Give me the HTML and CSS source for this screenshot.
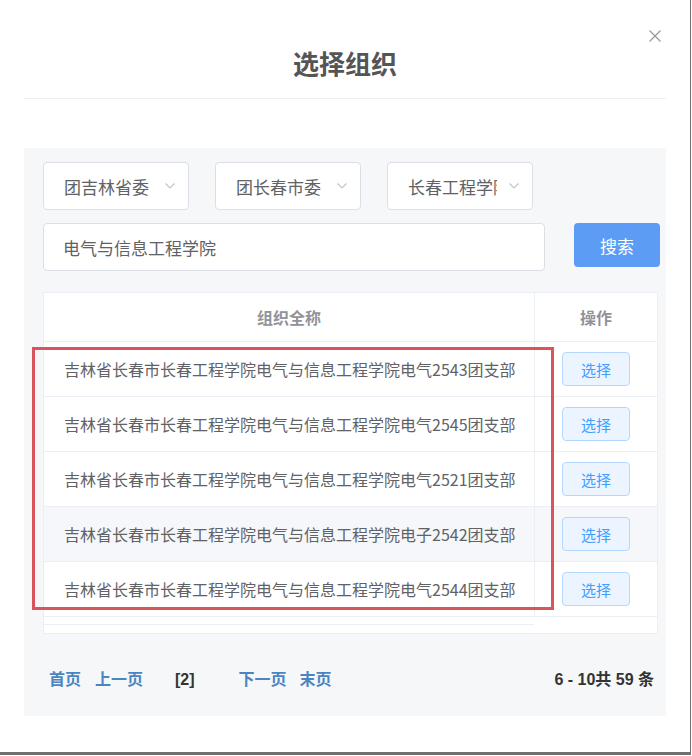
FILE: index.html
```html
<!DOCTYPE html>
<html lang="zh-CN">
<head>
    <meta charset="UTF-8">
    <meta name="viewport" content="width=device-width, initial-scale=1.0">
    <title>选择组织</title>
    <link rel="stylesheet" href="styles.css">
</head>
<body>

    <div class="dialog">
        <!-- Header -->
        <div class="dialog-header">
            <h2 class="dialog-title">选择组织</h2>
            <button class="close-btn" aria-label="关闭">
                <svg width="12" height="12" viewBox="0 0 12 12"><path d="M0.5 0.5L11.5 11.5M11.5 0.5L0.5 11.5" stroke="#9a9a9a" stroke-width="1.3" fill="none"/></svg>
            </button>
        </div>

        <!-- Search panel -->
        <div class="panel">
            <div class="filter-row">
                <div class="select">
                    <span class="select-text">团吉林省委</span>
                    <svg class="arrow" width="10" height="6" viewBox="0 0 10 6"><path d="M0.5 0.5L5 5L9.5 0.5" stroke="#c0c4cc" stroke-width="1.2" fill="none"/></svg>
                </div>
                <div class="select">
                    <span class="select-text">团长春市委</span>
                    <svg class="arrow" width="10" height="6" viewBox="0 0 10 6"><path d="M0.5 0.5L5 5L9.5 0.5" stroke="#c0c4cc" stroke-width="1.2" fill="none"/></svg>
                </div>
                <div class="select">
                    <span class="select-text">长春工程学院</span>
                    <svg class="arrow" width="10" height="6" viewBox="0 0 10 6"><path d="M0.5 0.5L5 5L9.5 0.5" stroke="#c0c4cc" stroke-width="1.2" fill="none"/></svg>
                </div>
            </div>

            <div class="search-row">
                <input class="search-input" type="text" value="电气与信息工程学院">
                <button class="search-btn">搜索</button>
            </div>

            <!-- Result table -->
            <div class="org-table">
                <div class="tr th">
                    <div class="td name">组织全称</div>
                    <div class="td op">操作</div>
                </div>
                <div class="tr">
                    <div class="td name">吉林省长春市长春工程学院电气与信息工程学院电气2543团支部</div>
                    <div class="td op"><button class="pick-btn">选择</button></div>
                </div>
                <div class="tr">
                    <div class="td name">吉林省长春市长春工程学院电气与信息工程学院电气2545团支部</div>
                    <div class="td op"><button class="pick-btn">选择</button></div>
                </div>
                <div class="tr">
                    <div class="td name">吉林省长春市长春工程学院电气与信息工程学院电气2521团支部</div>
                    <div class="td op"><button class="pick-btn">选择</button></div>
                </div>
                <div class="tr hover">
                    <div class="td name">吉林省长春市长春工程学院电气与信息工程学院电子2542团支部</div>
                    <div class="td op"><button class="pick-btn">选择</button></div>
                </div>
                <div class="tr">
                    <div class="td name">吉林省长春市长春工程学院电气与信息工程学院电气2544团支部</div>
                    <div class="td op"><button class="pick-btn">选择</button></div>
                </div>
                <div class="table-foot"><div class="foot-line"></div></div>
            </div>

            <!-- Annotation box -->
            <div class="red-mark"></div>

            <!-- Pagination -->
            <div class="pager">
                <div class="pager-links">
                    <a class="pg first">首页</a>
                    <a class="pg prev">上一页</a>
                    <span class="pg current">[2]</span>
                    <a class="pg next">下一页</a>
                    <a class="pg last">末页</a>
                </div>
                <div class="pager-total">6 - 10共 59 条</div>
            </div>
        </div>
    </div>

</body>
</html>
```

FILE: styles.css
```css
/* Page */
body {
    margin: 0;
    background: #fff;
    font-family: "Noto Sans CJK SC", "Noto Sans", sans-serif;
}

/* Dialog (with the screen edge on right/bottom) */
.dialog {
    width: 690px;
    height: 752px;
    border-right: 1px solid #6e6e6e;
    border-bottom: 3px solid #707070;
    background: #fff;
    position: relative;
}

/* Header */
.dialog-header {
    margin: 0 24px;
    padding: 45px 0 17px;
    border-bottom: 1px solid #eeeff2;
}

.dialog-title {
    margin: 0;
    height: 36px;
    line-height: 36px;
    text-align: center;
    font-size: 26px;
    font-weight: bold;
    color: #555;
}

.close-btn {
    position: absolute;
    top: 30px;
    right: 29px;
    width: 12px;
    height: 12px;
    padding: 0;
    border: none;
    background: none;
    display: flex;
}

/* Gray search panel */
.panel {
    position: relative;
    margin: 49px 24px 0;
    height: 568px;
    box-sizing: border-box;
    padding: 14px 6px 0 19px;
    background: #f6f7f9;
}

.filter-row {
    display: flex;
    gap: 26px;
}

.select {
    width: 146px;
    height: 48px;
    box-sizing: border-box;
    display: flex;
    align-items: center;
    padding: 0 13px 0 20px;
    background: #fff;
    border: 1px solid #dcdfe6;
    border-radius: 4px;
}

.select-text {
    width: 91px;
    margin-right: 12px;
    overflow: hidden;
    white-space: nowrap;
    font-size: 17px;
    color: #606266;
}

.arrow {
    flex: none;
}

.search-row {
    display: flex;
    align-items: flex-start;
    margin-top: 13px;
}

.search-input {
    width: 502px;
    height: 48px;
    box-sizing: border-box;
    padding: 0 19px;
    border: 1px solid #dcdfe6;
    border-radius: 4px;
    background: #fff;
    font-family: inherit;
    font-size: 17px;
    color: #606266;
    outline: none;
}

.search-btn {
    margin-left: 29px;
    width: 86px;
    height: 44px;
    border: none;
    border-radius: 4px;
    background: #5d9cf5;
    color: #fff;
    font-family: inherit;
    font-size: 17px;
}

/* Table */
.org-table {
    margin-top: 21px;
    width: 615px;
    box-sizing: border-box;
    border: 1px solid #ebeef5;
    background: #fff;
}

.tr {
    display: grid;
    grid-template-columns: 491px 1fr;
    height: 55px;
    box-sizing: border-box;
    border-bottom: 1px solid #ebeef5;
}

.tr.th {
    height: 49px;
}

.tr.hover {
    background: #f5f7fa;
}

.td {
    display: flex;
    align-items: center;
}

.td.name {
    box-sizing: border-box;
    border-right: 1px solid #ebeef5;
    padding-left: 20px;
    font-size: 16px;
    color: #606266;
    white-space: nowrap;
}

.td.op {
    justify-content: center;
}

.th .td {
    justify-content: center;
    padding-left: 0;
    font-size: 16px;
    font-weight: bold;
    color: #909399;
}

.pick-btn {
    width: 68px;
    height: 34px;
    padding: 0;
    border: 1px solid #b3d8ff;
    border-radius: 4px;
    background: #ecf5ff;
    color: #409eff;
    font-family: inherit;
    font-size: 15px;
}

.table-foot {
    height: 16px;
}

.foot-line {
    width: 490px;
    height: 7px;
    border-bottom: 1px solid #ebeef5;
}

/* Red annotation rectangle */
.red-mark {
    position: absolute;
    left: 8px;
    top: 199px;
    width: 522px;
    height: 263px;
    box-sizing: border-box;
    border: 3px solid #d9545b;
}

/* Pagination */
.pager {
    margin-top: 32px;
    padding: 0 6px;
    height: 24px;
    display: flex;
    align-items: center;
    justify-content: space-between;
    font-family: "Liberation Sans", "Noto Sans CJK SC", sans-serif;
    font-size: 16px;
    font-weight: bold;
}

.pager-links {
    display: flex;
    align-items: baseline;
}

.pg {
    color: #4b85c1;
}

.prev {
    margin-left: 14px;
}

.current {
    margin-left: 32px;
    color: #333;
}

.next {
    margin-left: 44px;
}

.last {
    margin-left: 13px;
}

.pager-total {
    color: #333;
}
```
